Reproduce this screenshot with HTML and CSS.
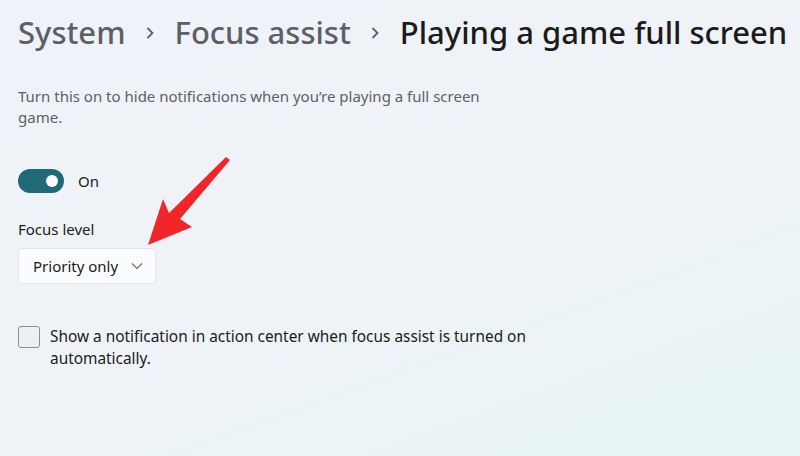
FILE: index.html
```html
<!DOCTYPE html>
<html lang="en">

<head>
    <meta charset="UTF-8">
    <meta name="viewport" content="width=device-width, initial-scale=1.0">
    <title>Focus assist - Playing a game full screen</title>
    <link rel="stylesheet" href="styles.css">
</head>

<body>
    <div class="page">
        <h1 class="crumbs">
            <span class="crumb">System</span>
            <svg class="sep" width="10" height="16" viewBox="0 0 10 16"><path d="M2.5 3 L7.5 8 L2.5 13" /></svg>
            <span class="crumb">Focus assist</span>
            <svg class="sep" width="10" height="16" viewBox="0 0 10 16"><path d="M2.5 3 L7.5 8 L2.5 13" /></svg>
            <span class="crumb current">Playing a game full screen</span>
        </h1>

        <p class="desc">Turn this on to hide notifications when you’re playing a full screen game.</p>

        <div class="toggle-row">
            <span class="toggle on"><span class="knob"></span></span>
            <span class="toggle-label">On</span>
        </div>

        <div class="field">
            <div class="field-label">Focus level</div>
            <div class="select">
                <span>Priority only</span>
                <svg class="chev" width="12" height="8" viewBox="0 0 12 8"><path d="M1 1.5 L6 6.5 L11 1.5" /></svg>
            </div>
        </div>

        <div class="check-row">
            <span class="checkbox"></span>
            <span class="check-label">Show a notification in action center when focus assist is turned on automatically.</span>
        </div>
    </div>

    <!-- callout arrow pointing at the dropdown -->
    <svg class="callout" width="800" height="456" viewBox="0 0 800 456">
        <polygon points="226,157 230,160 180,219 192,227 148,245 163,199 169,213" />
    </svg>
</body>

</html>
```

FILE: styles.css
```css
html,
body {
    margin: 0;
    height: 100%;
    overflow: hidden;
}

body {
    font-family: "Noto Sans", "Open Sans", sans-serif;
    color: #1b1b1b;
    background: linear-gradient(160deg, #eff2f8 0%, #eff3f7 55%, #e6f4f5 100%);
    position: relative;
}

.page {
    padding: 0 18px;
}

.crumbs {
    margin: 0;
    padding-top: 10px;
    display: flex;
    align-items: center;
    font-size: 31px;
    font-weight: 500;
    line-height: 44px;
    white-space: nowrap;
}

.crumb {
    color: #5c6066;
    flex: none;
}

.crumb.current {
    color: #1b1b1b;
}

.sep {
    flex: none;
    margin: 2px 20px 0 19px;
}

.sep path {
    fill: none;
    stroke: #5c6066;
    stroke-width: 1.8;
}

.desc {
    margin: 32px 0 0;
    width: 500px;
    font-size: 15px;
    line-height: 21px;
    color: #5d6066;
}

.toggle-row {
    display: flex;
    align-items: center;
    margin-top: 41px;
}

.toggle {
    width: 46px;
    height: 24px;
    border-radius: 12px;
    background: #1f6a76;
    display: flex;
    align-items: center;
    justify-content: flex-end;
    padding: 0 6px;
    box-sizing: border-box;
}

.knob {
    width: 12px;
    height: 12px;
    border-radius: 50%;
    background: #fff;
}

.toggle-label {
    margin-left: 14px;
    font-size: 15px;
}

.field {
    margin-top: 26px;
}

.field-label {
    font-size: 15px;
    line-height: 20px;
}

.select {
    margin-top: 9px;
    width: 138px;
    height: 36px;
    box-sizing: border-box;
    background: #fbfcfd;
    border: 1px solid #e1e4e8;
    border-radius: 4px;
    display: flex;
    align-items: center;
    justify-content: space-between;
    padding: 0 12px 0 14px;
    font-size: 15px;
}

.chev path {
    fill: none;
    stroke: #6a6d72;
    stroke-width: 1.1;
}

.check-row {
    display: flex;
    align-items: flex-start;
    margin-top: 42px;
}

.checkbox {
    flex: none;
    width: 22px;
    height: 22px;
    box-sizing: border-box;
    border: 1px solid #8b8e93;
    border-radius: 3px;
    background: #eceff3;
}

.check-label {
    margin-left: 10px;
    width: 500px;
    font-size: 15.4px;
    line-height: 22px;
    color: #1b1b1b;
}

.callout {
    position: absolute;
    left: 0;
    top: 0;
    pointer-events: none;
}

.callout polygon {
    fill: #f0262a;
}
```
